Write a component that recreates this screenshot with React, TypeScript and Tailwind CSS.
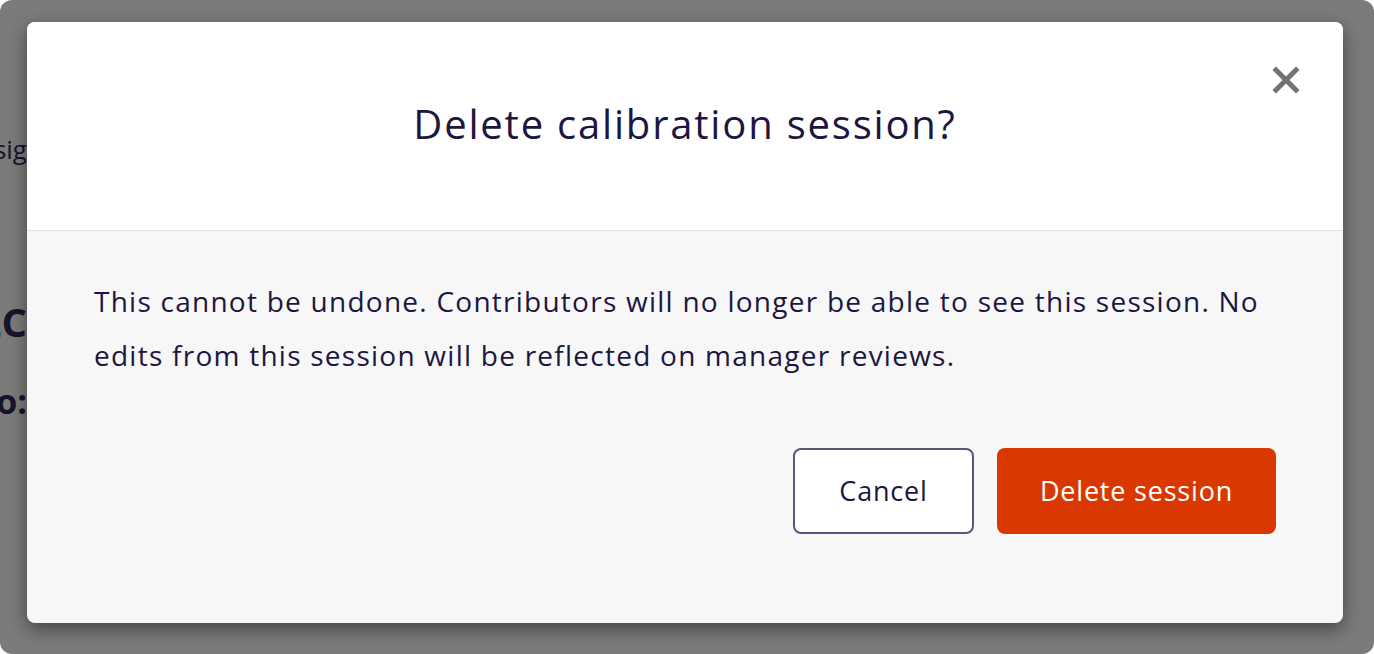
export default function App() {
  return (
    <div className="w-[1374px] h-[654px] bg-white" style={{ fontFamily: "'Open Sans', 'Noto Sans', sans-serif" }}>
      <div className="flex h-full w-full overflow-hidden rounded-[12px] bg-[#7b7b7a]">
        <div className="flex w-[27px] shrink-0 flex-col items-end overflow-hidden text-[#17142c]">
          <div className="mt-[131px] whitespace-nowrap text-[26px] leading-[36px]">assig</div>
          <div className="mt-[130px] whitespace-nowrap text-[40px] font-bold leading-[50px]">ALC</div>
          <div className="mt-[34px] whitespace-nowrap text-[34px] font-bold leading-[40px]">Pro:</div>
        </div>
        <div className="mt-[22px] flex h-[601px] w-[1316px] flex-col overflow-hidden rounded-[8px] bg-[#f7f7f7] shadow-[0_6px_18px_rgba(0,0,0,0.45)]">
          <div className="relative flex h-[209px] shrink-0 items-center justify-center border-b border-[#e2e2e2] bg-white">
            <h1 className="mb-[4px] text-[40px] leading-[48px] tracking-[1.8px] text-[#1c1640]">Delete calibration session?</h1>
            <button className="absolute right-[42px] top-[43px] flex h-[30px] w-[30px] items-center justify-center text-[#737373]">
              <svg width="28" height="28" viewBox="0 0 28 28" fill="none">
                <path d="M4 4L24 24M24 4L4 24" stroke="currentColor" strokeWidth="5" strokeLinecap="square" />
              </svg>
            </button>
          </div>
          <div className="flex flex-col px-[67px] pt-[43px]">
            <p className="text-[28px] leading-[54px] tracking-[1.25px] text-[#1c1640]">
              This cannot be undone. Contributors will no longer be able to see this session. No edits from this session will be reflected on manager reviews.
            </p>
            <div className="mt-[66px] flex justify-end gap-[23px]">
              <button className="h-[86px] w-[181px] rounded-[8px] border-2 border-[#5a557a] bg-white text-[27px] tracking-[0.8px] text-[#1c1640]">
                Cancel
              </button>
              <button className="h-[86px] w-[279px] rounded-[8px] bg-[#d93900] text-[27px] tracking-[0.8px] text-white">
                Delete session
              </button>
            </div>
          </div>
        </div>
      </div>
    </div>
  );
}
